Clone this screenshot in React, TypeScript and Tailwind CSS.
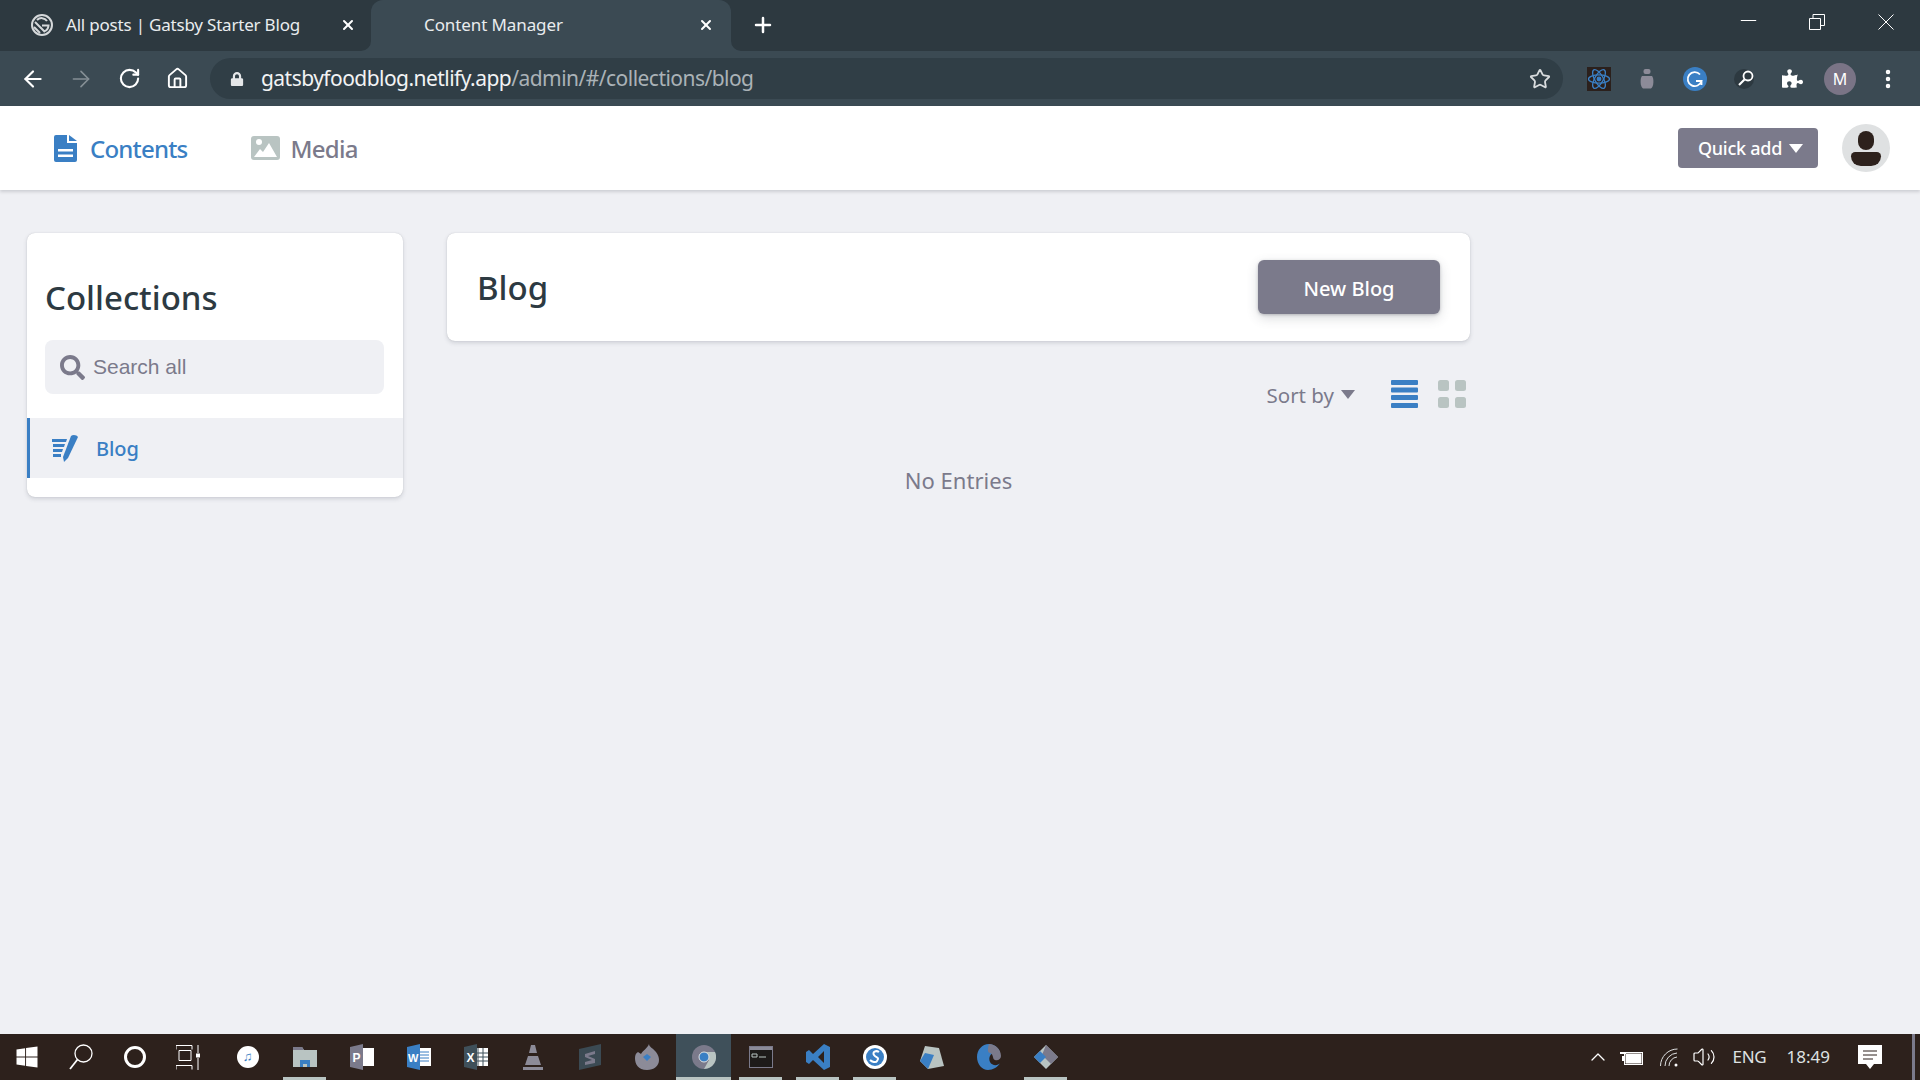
import { ArrowLeft, ArrowRight, RotateCw, Home, Star, Plus, X, MoreVertical, Minus, ChevronUp, Volume2 } from "lucide-react";
import { FaSearch, FaPuzzlePiece, FaWindows, FaLock } from "react-icons/fa";

const ui = "font-['Noto_Sans',sans-serif]";

function GatsbyLogo() {
  return (
    <svg width="24" height="24" viewBox="0 0 24 24" fill="none" stroke="#d5d8da" strokeWidth="2">
      <circle cx="12" cy="12" r="10" />
      <path d="M5 9l10 10M4 14l6 6M17 8a6.5 6.5 0 0 0-10-1M12 12.5h6.5a6.5 6.5 0 0 1-5 6" />
    </svg>
  );
}

function ChromeBar() {
  return (
    <div className="h-[51px] bg-[#2d3940] flex items-stretch text-white">
      <div className="w-[371px] flex items-center pl-[30px] pb-[2px]">
        <GatsbyLogo />
        <span className={`${ui} ml-[12px] text-[17px] tracking-[-0.2px] text-[#e9ecee]`}>All posts | Gatsby Starter Blog</span>
        <X className="ml-auto mr-[15px]" size={16} strokeWidth={3} />
      </div>
      <div className="relative w-[360px] bg-[#3b4a53] rounded-t-[12px] flex items-center pl-[53px] pb-[2px]">
        <span className={`${ui} text-[17px] tracking-[-0.1px] text-[#e9ecee]`}>Content Manager</span>
        <X className="ml-auto mr-[17px]" size={16} strokeWidth={3} />
        <svg className="absolute bottom-0 left-[-10px]" width="10" height="10" viewBox="0 0 10 10">
          <path d="M10 0v10H0a10 10 0 0 0 10-10z" fill="#3b4a53" />
        </svg>
        <svg className="absolute bottom-0 right-[-10px]" width="10" height="10" viewBox="0 0 10 10">
          <path d="M0 0v10h10A10 10 0 0 1 0 0z" fill="#3b4a53" />
        </svg>
      </div>
      <div className="ml-[20px] flex items-center pb-[2px]">
        <Plus size={24} strokeWidth={2.5} />
      </div>
      <div className="ml-auto flex items-center pr-[26px] pb-[8px]">
        <Minus className="mr-[48px] mb-[3px]" size={25} strokeWidth={1} />
        <svg className="mr-[53px]" width="16" height="16" viewBox="0 0 16 16" fill="none" stroke="#fff" strokeWidth="1">
          <path d="M.5 4.5h11v11H.5zM4 4.5V.5h11.5v11H11.5" />
        </svg>
        <svg width="16" height="16" viewBox="0 0 16 16" stroke="#fff" strokeWidth="1">
          <path d="M.5.5l15 15M15.500.5l-15 15" />
        </svg>
      </div>
    </div>
  );
}

function ReactExt() {
  return (
    <svg width="24" height="24" viewBox="0 0 24 24" className="bg-[#2b201c]" fill="none" stroke="#3a7fc4" strokeWidth="1.3">
      <ellipse cx="12" cy="12" rx="10.500" ry="4.200" />
      <ellipse cx="12" cy="12" rx="10.500" ry="4.200" transform="rotate(60 12 12)" />
      <ellipse cx="12" cy="12" rx="10.500" ry="4.200" transform="rotate(120 12 12)" />
      <circle cx="12" cy="12" r="1.800" fill="#3a7fc4" />
    </svg>
  );
}

function Toolbar() {
  return (
    <div className="h-[55px] bg-[#3b4a53] flex items-center text-white">
      <div className="w-[210px] flex items-center pl-[9px]">
        <div className="w-[48px] flex justify-center"><ArrowLeft size={26} strokeWidth={2} /></div>
        <div className="w-[48px] flex justify-center"><ArrowRight size={26} strokeWidth={1.5} className="text-[#858f95]" /></div>
        <div className="w-[48px] flex justify-center"><RotateCw size={23} strokeWidth={2.2} /></div>
        <div className="w-[48px] flex justify-center"><Home size={23} strokeWidth={2} /></div>
      </div>
      <div className="w-[1353px] h-[41px] rounded-full bg-[#303e46] flex items-center pl-[20px] pr-[12px]">
        <FaLock size={14} className="text-[#e5e7e9]" />
        <span className={`${ui} ml-[17px] text-[21px] tracking-[-0.54px] text-[#f2f3f4]`}>
          gatsbyfoodblog.netlify.app<span className="text-[#aab2b7]">/admin/#/collections/blog</span>
        </span>
        <Star className="ml-auto text-[#d9dcde]" size={22} strokeWidth={2} />
      </div>
      <div className="flex items-center ml-[12px]">
        <div className="w-[48px] flex justify-center"><ReactExt /></div>
        <div className="w-[48px] flex justify-center">
          <svg width="14" height="20" viewBox="0 0 14 20" fill="#8c8b98">
            <rect x="3.500" y="0" width="7" height="5" rx="2" />
            <path d="M2 7h10c2 2 2 11-1 12.500H3C0 18 0 9 2 7z" />
          </svg>
        </div>
        <div className="w-[48px] flex justify-center">
          <svg width="24" height="24" viewBox="0 0 24 24" fill="none">
            <circle cx="12" cy="12" r="12" fill="#3a7fc4" />
            <path d="M17 7.500a7 7 0 1 0 1.500 6.500h-5.500M18.500 14v4" stroke="#fff" strokeWidth="1.800" />
          </svg>
        </div>
        <div className="w-[52px] flex justify-center">
          <svg width="22" height="22" viewBox="0 0 22 22" fill="none">
            <circle cx="10" cy="11" r="10" fill="#2d3940" />
            <circle cx="14" cy="8" r="4.500" stroke="#fff" strokeWidth="1.800" />
            <path d="M10.500 11.500L5 17" stroke="#fff" strokeWidth="2.200" />
          </svg>
        </div>
        <div className="w-[42px] flex justify-center"><FaPuzzlePiece size={21} /></div>
        <div className="w-[54px] flex justify-center">
          <div className={`w-[32px] h-[32px] rounded-full bg-[#7a7486] flex items-center justify-center text-[16px] ${ui}`}>M</div>
        </div>
        <div className="w-[42px] flex justify-center"><MoreVertical size={24} strokeWidth={2.5} /></div>
      </div>
    </div>
  );
}

function Triangle({ className }: { className: string }) {
  return (
    <svg className={className} width="14" height="9" viewBox="0 0 14 9" fill="currentColor">
      <path d="M0 0h14L7 9z" />
    </svg>
  );
}

function AppHeader() {
  return (
    <div className="relative h-[84px] bg-white flex items-center shadow-[0_2px_3px_rgba(68,74,87,0.2)] pl-[54px] pr-[30px]">
      <svg width="23" height="27" viewBox="0 0 23 27" fill="#3a7fc4">
        <path d="M2 0h11v8h10v17a2 2 0 0 1-2 2H2a2 2 0 0 1-2-2V2a2 2 0 0 1 2-2z" />
        <path d="M15 0l8 6h-8z" />
        <path d="M4 14h15v2.500H4zM4 19.500h15V22H4z" fill="#fff" />
      </svg>
      <span className={`${ui} ml-[13px] mt-[2px] text-[24px] font-medium tracking-[-0.8px] text-[#3a7fc4]`}>Contents</span>
      <svg className="ml-[64px]" width="29" height="24" viewBox="0 0 29 24">
        <rect width="29" height="24" rx="3" fill="#b9c4c2" />
        <circle cx="8" cy="6" r="3" fill="#fff" />
        <path d="M3 21l6-8 3 3 6-9 8 14z" fill="#fff" />
      </svg>
      <span className={`${ui} ml-[10px] mt-[2px] text-[24px] font-medium tracking-[-0.7px] text-[#7b7a8b]`}>Media</span>
      <button className={`${ui} ml-auto h-[40px] w-[140px] pl-[5px] rounded-[4px] bg-[#7b7a8b] text-[18px] font-medium text-white flex items-center justify-center gap-[7px] tracking-[-0.25px]`}>
        Quick add <Triangle className="text-white" />
      </button>
      <div className="ml-[24px] w-[48px] h-[48px] rounded-full bg-[#dfe1e2] overflow-hidden flex flex-col items-center justify-center">
        <div className="w-[16px] h-[19px] rounded-full bg-[#2d211c]" />
        <div className="mt-[2px] w-[30px] h-[14px] rounded-b-[14px] rounded-t-[6px] bg-[#2d211c]" />
      </div>
    </div>
  );
}

function Sidebar() {
  return (
    <div className="w-[376px] h-[264px] rounded-[8px] bg-white shadow-[0_2px_4px_rgba(68,74,87,0.18),0_0_1px_rgba(68,74,87,0.3)] overflow-hidden">
      <h1 className={`${ui} pl-[18px] pt-[43px] h-[107px] text-[33px] leading-[44px] font-medium text-[#2d3a42]`}>Collections</h1>
      <div className="ml-[18px] mr-[19px] h-[54px] rounded-[8px] bg-[#eff0f4] flex items-center pl-[15px]">
        <FaSearch className="text-[#7b7a8b]" size={25} />
        <span className="ml-[8px] font-['Liberation_Sans',sans-serif] text-[21px] text-[#7b7a8b]">Search all</span>
      </div>
      <div className="mt-[24px] h-[60px] bg-[#eff0f4] border-l-[3px] border-[#3a7fc4] flex items-center pl-[22px]">
        <svg width="27" height="28" viewBox="0 0 27 28" fill="#3a7fc4">
          <path d="M0 5h15l-1 3H0zM1 10h12l-1 3H1zM1 15h10l-1 3H1zM1 20h8v3H1z" />
          <path d="M19 2c2-2 6-1 7 1l-10 21-4 4-1-5z" />
        </svg>
        <span className={`${ui} ml-[17px] mt-[2px] text-[20px] font-medium tracking-[-0.1px] text-[#3a7fc4]`}>Blog</span>
      </div>
    </div>
  );
}

function MainPanel() {
  return (
    <div className="w-[1023px]">
      <div className="h-[108px] rounded-[8px] bg-white shadow-[0_2px_4px_rgba(68,74,87,0.18),0_0_1px_rgba(68,74,87,0.3)] flex items-center pl-[30px] pr-[30px]">
        <h2 className={`${ui} mt-[2px] text-[33px] font-medium text-[#2d3a42]`}>Blog</h2>
        <button className={`${ui} ml-auto w-[182px] h-[54px] pt-[3px] rounded-[6px] bg-[#7b7a8b] text-[20px] font-medium text-white shadow-[0_4px_12px_rgba(68,74,87,0.2),0_1px_3px_rgba(68,74,87,0.3)]`}>New Blog</button>
      </div>
      <div className="mt-[39px] flex items-center h-[28px] pr-[4px]">
        <span className={`${ui} ml-auto mt-[2px] text-[20.500px] text-[#7b7a8b]`}>Sort by</span>
        <Triangle className="ml-[7px] text-[#7b7a8b]" />
        <svg className="ml-[36px]" width="27" height="28" viewBox="0 0 27 28" fill="#3a7fc4">
          <rect y="0" width="27" height="5" rx="1" />
          <rect y="7.500" width="27" height="5" rx="1" />
          <rect y="15" width="27" height="5" rx="1" />
          <rect y="23" width="27" height="5" rx="1" />
        </svg>
        <svg className="ml-[20px]" width="28" height="28" viewBox="0 0 28 28" fill="#b9c4c2">
          <rect width="11" height="11" rx="2.500" />
          <rect x="17" width="11" height="11" rx="2.500" />
          <rect y="17" width="11" height="11" rx="2.500" />
          <rect x="17" y="17" width="11" height="11" rx="2.500" />
        </svg>
      </div>
      <p className={`${ui} mt-[56px] text-center text-[22px] tracking-[0.05px] text-[#7b7a8b]`}>No Entries</p>
    </div>
  );
}

function TaskIcon({ children, open, active, wide }: { children: React.ReactNode; open?: boolean; active?: boolean; wide?: boolean }) {
  return (
    <div className={`relative h-[46px] flex items-center justify-center ${wide ? "w-[54px]" : "w-[57px]"}`}>
      {active && <div className="absolute inset-y-0 inset-x-[1px] bg-[#3f505a]" />}
      <div className="relative">{children}</div>
      {open && <div className={`absolute bottom-0 h-[3px] bg-[#b9c4c2] ${active ? "inset-x-[1px]" : "inset-x-[7px]"}`} />}
    </div>
  );
}

function Taskbar() {
  return (
    <div className="h-[46px] bg-[#2d211c] flex items-center text-white">
      <TaskIcon wide><FaWindows size={24} /></TaskIcon>
      <TaskIcon wide>
        <svg width="24" height="26" viewBox="0 0 24 26" fill="none" stroke="#fff" strokeWidth="1.300">
          <circle cx="14.500" cy="9.500" r="8.500" /><path d="M8.500 15.500L1 25" strokeWidth="1.800" />
        </svg>
      </TaskIcon>
      <TaskIcon wide><div className="w-[22px] h-[22px] rounded-full border-[3px] border-white" /></TaskIcon>
      <div className="w-[57px] pl-[14px] flex items-center">
        <svg width="24" height="25" viewBox="0 0 24 25" fill="none" stroke="#fff" strokeWidth="1">
          <path d="M0 .5h16M3 5.500h12v10H3zM0 20.500h16M0 24.500V20.500M16 .5v4M0 .5v4M16 24.500v-4" />
          <path d="M22 0v8M22 13v12" /><rect x="20.500" y="9" width="3" height="3" fill="#fff" />
        </svg>
      </div>
      <TaskIcon>
        <div className="w-[22px] h-[22px] rounded-full bg-white flex items-center justify-center text-[13px] text-[#3a7fc4]">♫</div>
      </TaskIcon>
      <TaskIcon open>
        <svg width="24" height="20" viewBox="0 0 24 20">
          <path d="M0 0h9l2 3h13v17H0z" fill="#b9c4c2" /><path d="M0 0h9l2 3H0z" fill="#7b7a8b" />
          <path d="M7 20v-7h10v7h-3v-3h-4v3z" fill="#3a7fc4" />
        </svg>
      </TaskIcon>
      <TaskIcon>
        <svg width="24" height="26" viewBox="0 0 24 26">
          <rect x="9" y="4" width="15" height="18" fill="#fff" /><path d="M0 3l13-3v26L0 23z" fill="#7b7a8b" />
          <text x="2.500" y="18" fontSize="12" fontWeight="700" fill="#fff" fontFamily="Liberation Sans">P</text>
        </svg>
      </TaskIcon>
      <TaskIcon>
        <svg width="24" height="26" viewBox="0 0 24 26">
          <rect x="9" y="4" width="15" height="18" fill="#fff" /><path d="M11 8h11M11 11h11M11 14h11M11 17h11" stroke="#3a7fc4" />
          <path d="M0 3l13-3v26L0 23z" fill="#3a7fc4" />
          <text x="1" y="18" fontSize="11" fontWeight="700" fill="#fff" fontFamily="Liberation Sans">W</text>
        </svg>
      </TaskIcon>
      <TaskIcon>
        <svg width="24" height="26" viewBox="0 0 24 26">
          <rect x="9" y="4" width="15" height="18" fill="#fff" /><path d="M14 4v18M19 4v18M10 9h14M10 13h14M10 17h14" stroke="#3f505a" />
          <path d="M0 3l13-3v26L0 23z" fill="#3f505a" />
          <text x="2.500" y="18" fontSize="12" fontWeight="700" fill="#fff" fontFamily="Liberation Sans">X</text>
        </svg>
      </TaskIcon>
      <TaskIcon>
        <svg width="20" height="26" viewBox="0 0 20 26" fill="#8c8b98">
          <path d="M8 1h4l2 8H6zM5 12h10l3 9H2zM0 23h20v3H0z" />
        </svg>
      </TaskIcon>
      <TaskIcon>
        <svg width="22" height="26" viewBox="0 0 22 26">
          <path d="M0 5l22-5v21L0 26z" fill="#3b4a53" /><path d="M6 10l10-3v3l-7 2 7 3v4L6 21v-3l7-2-7-3z" fill="#7b7a8b" />
        </svg>
      </TaskIcon>
      <TaskIcon>
        <svg width="24" height="26" viewBox="0 0 24 26">
          <path d="M12 26C3 26 0 20 0 14c0-3 1-5 3-6l3 2c2-4 6-5 8-10 0 3 4 4 7 8 2 3 3 5 3 8 0 6-5 10-12 10z" fill="#8c8b98" />
          <path d="M8 13l4-3 4 3-4 4z" fill="#3a7fc4" />
        </svg>
      </TaskIcon>
      <TaskIcon open active>
        <svg width="24" height="24" viewBox="0 0 24 24">
          <circle cx="12" cy="12" r="12" fill="#7b7a8b" /><path d="M12 7h11a12 12 0 0 1-11 17l5-9z" fill="#b9c4c2" />
          <circle cx="12" cy="12" r="5" fill="#3a7fc4" stroke="#dfe1e2" strokeWidth="1" />
        </svg>
      </TaskIcon>
      <TaskIcon open>
        <svg width="24" height="22" viewBox="0 0 24 22">
          <rect x=".5" y=".5" width="23" height="21" fill="#1d1a19" stroke="#7b7a8b" /><rect x="1" y="1" width="22" height="3" fill="#8c8b98" />
          <path d="M3 8h5v3H3zM10 11h7" stroke="#b9c4c2" fill="none" />
        </svg>
      </TaskIcon>
      <TaskIcon open>
        <svg width="24" height="26" viewBox="0 0 24 26" fill="#3a7fc4">
          <path d="M18 0l6 3v20l-6 3L7 16l-4 4-3-2v-10l3-2 4 4zM18 7l-6 6 6 6z" fillRule="evenodd" />
        </svg>
      </TaskIcon>
      <TaskIcon open>
        <svg width="24" height="24" viewBox="0 0 24 24" fill="none">
          <circle cx="12" cy="12" r="12" fill="#fff" /><circle cx="12" cy="12" r="9" fill="#3a7fc4" />
          <path d="M16 7c-3-2-7 0-5 3s6 2 3 6c-1 2-5 1-7-1" stroke="#fff" strokeWidth="2" />
        </svg>
      </TaskIcon>
      <TaskIcon>
        <svg width="24" height="24" viewBox="0 0 24 24">
          <path d="M5 1l14 2 5 18-16 3L0 16z" fill="#b9c4c2" /><path d="M0 16L5 8l9 2-6 14z" fill="#3a7fc4" />
        </svg>
      </TaskIcon>
      <TaskIcon>
        <svg width="24" height="26" viewBox="0 0 24 26">
          <path d="M12 0a13 13 0 0 1 11 8l-6 1c-3 0-6 4-4 9 2 4 8 4 10 1-2 4-7 7-12 7C5 26 0 20 0 13S5 0 12 0z" fill="#3a7fc4" />
          <path d="M12 0c6 0 12 5 12 12 0 3-3 5-6 4-3-1-1-6-5-7-4 0-1-9-1-9z" fill="#7b7a8b" />
        </svg>
      </TaskIcon>
      <TaskIcon open>
        <svg width="24" height="24" viewBox="0 0 24 24">
          <path d="M12 0l12 12-12 12L0 12z" fill="#b9c4c2" /><path d="M12 0l12 12-7 7-9-9z" fill="#7b7a8b" /><path d="M0 12l6-6 6 6-6 6z" fill="#3a7fc4" />
        </svg>
      </TaskIcon>
      <div className="ml-auto flex items-center h-full">
        <ChevronUp size={24} strokeWidth={1.300} />
        <svg className="ml-[10px]" width="24" height="16" viewBox="0 0 24 16" fill="none" stroke="#fff" strokeWidth="1">
          <rect x="4.500" y="3.500" width="18" height="12" /><rect x="6" y="5" width="15" height="9" fill="#fff" /><path d="M0 4h6M3 7v5" strokeWidth="2" />
        </svg>
        <svg className="ml-[16px]" width="20" height="19" viewBox="0 0 20 19" fill="none" stroke="#dfe1e2" strokeWidth="1">
          <path d="M.5 18a17 17 0 0 1 17-17M5 18A13 13 0 0 1 17 5M9 18a9 9 0 0 1 8-9" /><circle cx="16" cy="17" r="1.500" fill="#fff" stroke="none" />
        </svg>
        <Volume2 className="ml-[12px]" size={24} strokeWidth={1.200} />
        <span className={`${ui} ml-[16px] text-[17px] tracking-[-0.2px] text-[#dfe1e2]`}>ENG</span>
        <span className={`${ui} ml-[20px] text-[17px] text-[#dfe1e2]`}>18:49</span>
        <svg className="ml-[28px]" width="24" height="24" viewBox="0 0 24 24" fill="#fff">
          <path d="M0 0h24v19h-8l-4 5-4-5H0z" /><path d="M5 6h14M5 10h14M5 14h10" stroke="#2d211c" />
        </svg>
        <div className="ml-[30px] mr-[5px] w-[3px] h-full bg-[#7b7a8b]" />
      </div>
    </div>
  );
}

export default function App() {
  return (
    <div className="h-screen flex flex-col bg-[#eff0f4] overflow-hidden">
      <ChromeBar />
      <Toolbar />
      <AppHeader />
      <div className="flex-1 flex items-start pt-[43px] pl-[27px] gap-[44px]">
        <Sidebar />
        <MainPanel />
      </div>
      <Taskbar />
    </div>
  );
}
